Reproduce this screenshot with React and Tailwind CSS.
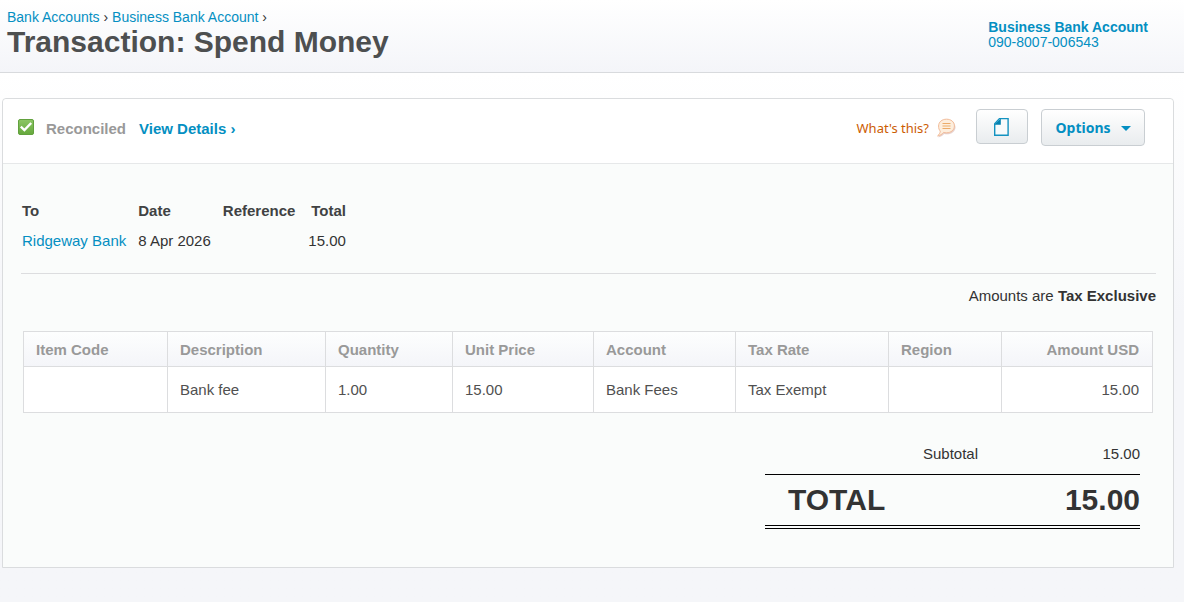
import React from "react";

const linkClass = "text-[#048fc2] hover:underline";

const buttonClass =
  "flex items-center justify-center rounded border border-[#c9ced2] bg-linear-to-b from-white to-[#e9ecee] text-[#048fc2]";

const columns = [
  { key: "itemCode", label: "Item Code", width: "w-[144px]" },
  { key: "description", label: "Description", width: "w-[158px]" },
  { key: "quantity", label: "Quantity", width: "w-[127px]" },
  { key: "unitPrice", label: "Unit Price", width: "w-[141px]" },
  { key: "account", label: "Account", width: "w-[142px]" },
  { key: "taxRate", label: "Tax Rate", width: "w-[153px]" },
  { key: "region", label: "Region", width: "w-[113px]" },
  { key: "amount", label: "Amount USD", width: "w-[151px]", right: true },
];

const lines = [
  {
    itemCode: "",
    description: "Bank fee",
    quantity: "1.00",
    unitPrice: "15.00",
    account: "Bank Fees",
    taxRate: "Tax Exempt",
    region: "",
    amount: "15.00",
  },
];

function TickIcon() {
  return (
    <svg className="mb-1" width="16" height="16" viewBox="0 0 16 16" aria-hidden="true">
      <defs>
        <linearGradient id="tick-fill" x1="0" y1="0" x2="0" y2="1">
          <stop offset="0" stopColor="#8cc665" />
          <stop offset="1" stopColor="#65a83c" />
        </linearGradient>
      </defs>
      <rect x="0.5" y="0.5" width="15" height="15" rx="1.5" fill="url(#tick-fill)" stroke="#62a13e" />
      <path d="M2.8 7.6 6.4 11 13.2 4" fill="none" stroke="#fff" strokeWidth="2.4" />
    </svg>
  );
}

function SpeechIcon() {
  return (
    <svg width="20" height="20" viewBox="0 0 20 20" aria-hidden="true">
      <path
        d="M11 2.5c4.600 0 8.500 2.800 8.500 6.700s-3.900 7.100-8.500 7.100c-1 0-2-.1-2.900-.4C6.500 17.600 4.500 19 2 19.200c1.300-1.300 1.900-2.700 2.100-4.500Z"
        fill="#c99a90"
        opacity="0.45"
      />
      <path
        d="M10.500 1.200c4.600 0 7.900 2.700 7.900 6.700s-3.300 6.900-7.900 6.900c-1 0-2-.1-2.900-.4-1.500 1.800-3.500 3.200-6 3.500 1.600-1.300 2.500-2.900 2.700-4.900C3 12 2.600 10.200 2.600 8c0-4 3.300-6.800 7.900-6.800Z"
        fill="#fdeedd"
        stroke="#f2bb98"
      />
      <path d="M6.500 5.500h8M6.500 8h8M6.500 10.500h8" stroke="#ecab68" strokeWidth="1.200" />
    </svg>
  );
}

function PageIcon() {
  return (
    <svg width="16" height="18" viewBox="0 0 16 18" aria-hidden="true">
      <path d="M5.500.6h8.600v16.600H.7V5.800Z" fill="#f7fafb" stroke="#1392c0" strokeWidth="1.400" />
      <path d="M6.800.4v6.300H.3Z" fill="#0482b0" />
    </svg>
  );
}

function Header() {
  return (
    <header className="flex h-[73px] items-start justify-between border-b border-[#d8dadd] bg-linear-to-b from-white to-[#f4f5f9] pl-[7px] pr-9">
      <div className="pt-2">
        <nav className="text-sm leading-[18px]" aria-label="Breadcrumb">
          <a href="#accounts" className={linkClass}>Bank Accounts</a> ›{" "}
          <a href="#account" className={linkClass}>Business Bank Account</a> ›
        </nav>
        <h1 className="text-3xl leading-8 font-bold text-[#4d4f50]">Transaction: Spend Money</h1>
      </div>
      <a href="#account" className="pt-5 text-sm leading-[15px] text-[#048fc2]">
        <strong className="block">Business Bank Account</strong>
        090-8007-006543
      </a>
    </header>
  );
}

function Toolbar() {
  return (
    <div className="flex h-[65px] items-start justify-between rounded-t border-b border-[#e6e8e9] bg-white pt-2.5 pr-7 pl-[15px]">
      <div className="flex h-10 items-center font-bold">
        <TickIcon />
        <span className="ml-3 text-[#999]">Reconciled</span>
        <a href="#details" className={`ml-[13px] ${linkClass}`}>View Details ›</a>
      </div>
      <div className="flex items-start">
        <a href="#help" className="mr-5 flex h-[38px] items-center gap-[7px] font-['Noto_Sans',sans-serif] text-[13px] text-[#cc5c02]">
          What's this?
          <SpeechIcon />
        </a>
        <button type="button" aria-label="Files" className={`mr-[13px] h-[35px] w-[52px] ${buttonClass}`}>
          <PageIcon />
        </button>
        <button
          type="button"
          className={`h-[37px] w-[104px] gap-2.5 font-['Noto_Sans',sans-serif] text-sm font-bold ${buttonClass}`}
        >
          Options
          <svg width="10" height="6" viewBox="0 0 10 6" aria-hidden="true">
            <path d="M0 1h10L5 6Z" fill="currentColor" />
          </svg>
        </button>
      </div>
    </div>
  );
}

function Summary() {
  return (
    <table className="ml-px text-left leading-[30px]">
      <thead>
        <tr className="text-[#404243]">
          <th className="pr-3">To</th>
          <th className="pr-3">Date</th>
          <th className="pr-3">Reference</th>
          <th className="pl-px text-right">Total</th>
        </tr>
      </thead>
      <tbody>
        <tr>
          <td className="pr-3">
            <a href="#contact" className={linkClass}>Ridgeway Bank</a>
          </td>
          <td className="pr-3">8 Apr 2026</td>
          <td className="pr-3" />
          <td className="pl-px text-right">15.00</td>
        </tr>
      </tbody>
    </table>
  );
}

function LineItems() {
  return (
    <table className="w-full table-fixed border-collapse border border-[#dcdddf] text-left">
      <thead className="bg-linear-to-b from-[#fdfefe] to-[#f4f5f9] text-[#999]">
        <tr className="h-[35px]">
          {columns.map((col) => (
            <th
              key={col.key}
              className={`border border-[#dcdddf] pt-px pr-[13px] pl-3 ${col.width} ${col.right ? "text-right" : ""}`}
            >
              {col.label}
            </th>
          ))}
        </tr>
      </thead>
      <tbody className="bg-white text-[#505050]">
        {lines.map((line, idx) => (
          <tr key={idx} className="h-[46px]">
            {columns.map((col) => (
              <td
                key={col.key}
                className={`border border-[#dcdddf] pr-[13px] pl-3 ${col.right ? "text-right" : ""}`}
              >
                {line[col.key]}
              </td>
            ))}
          </tr>
        ))}
      </tbody>
    </table>
  );
}

function Totals() {
  return (
    <dl className="mt-[27px] mr-4 ml-auto w-[375px]">
      <div className="flex h-[34px] justify-between leading-7">
        <dt className="w-[213px] text-right">Subtotal</dt>
        <dd>15.00</dd>
      </div>
      <div className="flex h-[55px] items-center justify-between border-t border-b-4 border-black pl-[23px] text-3xl font-bold [border-bottom-style:double]">
        <dt>TOTAL</dt>
        <dd>15.00</dd>
      </div>
    </dl>
  );
}

export default function App() {
  return (
    <div className="flex min-h-screen flex-col bg-[#f5f6f9] font-['Liberation_Sans',Arial,sans-serif] text-[15px] leading-5 text-[#333]">
      <Header />
      <main className="grow bg-linear-to-b from-white to-[#f5f6f9] to-[240px] pt-[25px] pr-2.5 pb-8 pl-0.5">
        <section className="rounded-t border border-[#dadcde] bg-[#fafcfb]">
          <Toolbar />
          <div className="pt-8 pr-[17px] pb-[38px] pl-[18px]">
            <Summary />
            <p className="mt-[17px] mb-[25px] border-t border-[#dcdddf] pt-3 text-right">
              Amounts are <strong>Tax Exclusive</strong>
            </p>
            <div className="mr-1 ml-0.5">
              <LineItems />
            </div>
            <Totals />
          </div>
        </section>
      </main>
    </div>
  );
}
